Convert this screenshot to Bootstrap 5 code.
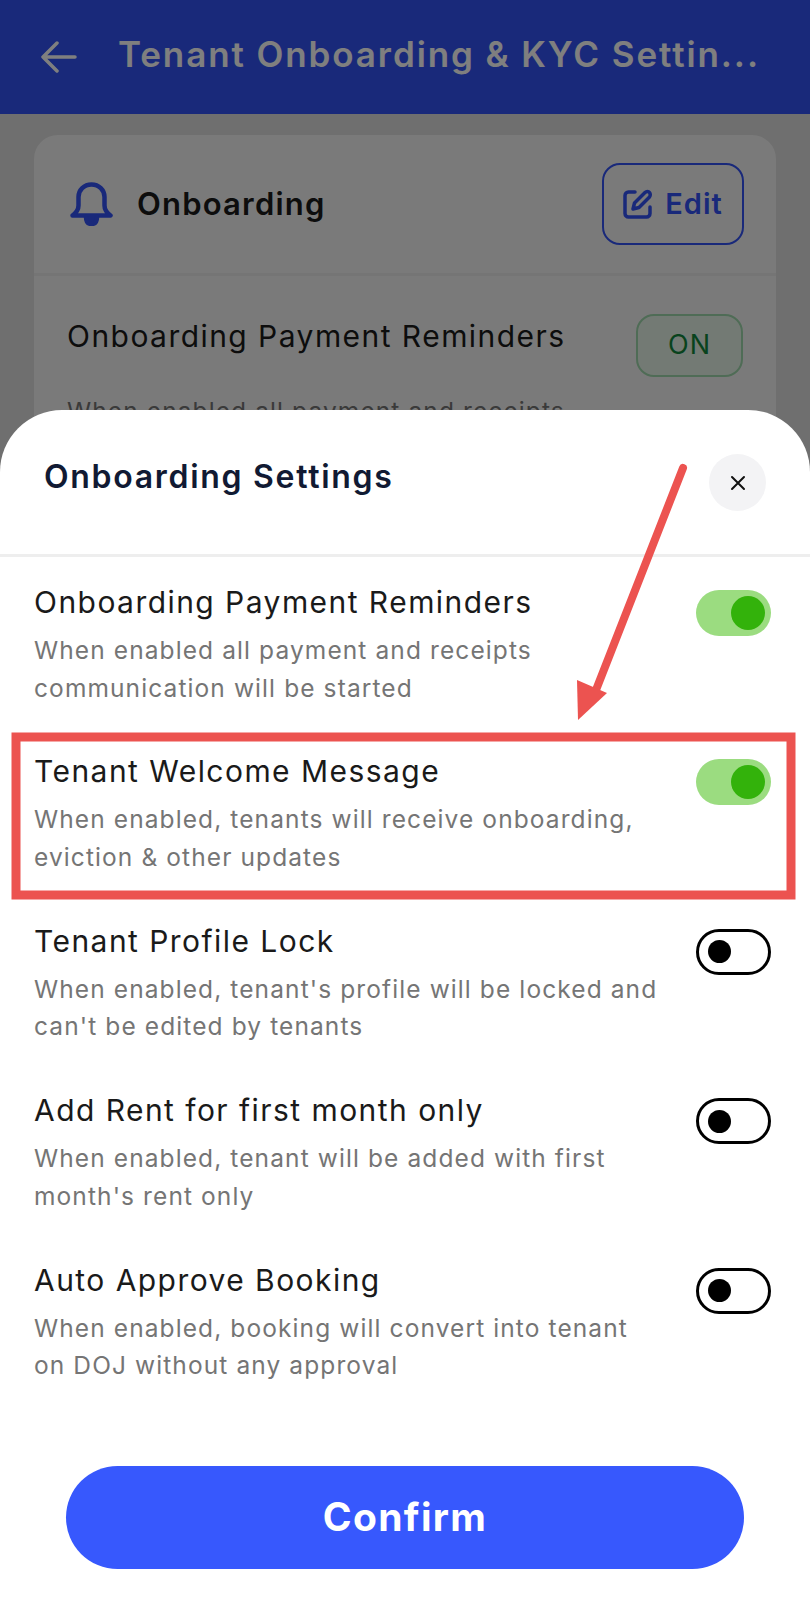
<!DOCTYPE html>
<html lang="en">
<head>
  <meta charset="UTF-8">
  <title>Onboarding Settings</title>
  <link href="https://cdn.jsdelivr.net/npm/bootstrap@5.3.0/dist/css/bootstrap.min.css" rel="stylesheet">
  <style>
    html, body { height: 1600px; }
    body {
      margin: 0;
      position: relative;
      overflow: hidden;
      background: #dedede;
      font-family: Inter, "Open Sans", sans-serif;
      color: #1a1a1a;
    }
    .app-head {
      height: 114px;
      padding: 0 41px;
      gap: 41px;
      background: #3252f4;
      color: #fff;
    }
    .app-head h1 { font-size: 35px; font-weight: 600; margin: 0 0 6px; white-space: nowrap; letter-spacing: 1.9px; }
    .bg-card {
      margin: 21px 34px 0;
      height: 600px;
      border: 0;
      border-radius: 24px;
      background: #f5f5f5;
    }
    .bg-head {
      height: 141px;
      padding: 0 32px 0 36px;
      border-bottom: 3px solid #ebebeb;
    }
    .bg-head h2 { font-size: 31px; font-weight: 600; margin: 0 0 0 24px; letter-spacing: 1.2px; }
    .edit-btn {
      width: 142px;
      height: 82px;
      gap: 12px;
      border: 2px solid #3252f4;
      border-radius: 18px;
      color: #3252f4;
      font-size: 29px;
      font-weight: 600;
      letter-spacing: 1px;
    }
    .edit-btn:hover { color: #3252f4; border-color: #3252f4; }
    .bg-row { padding: 41px 33px 0; }
    .on-pill {
      width: 107px;
      height: 63px;
      margin-top: -3px;
      border: 2px solid #9fd8ac;
      border-radius: 18px;
      background: #e6f4e9;
      color: #11863a;
      font-size: 27px;
      letter-spacing: 1px;
    }
    .row-name { font-size: 30px; line-height: 38px; margin: 0; letter-spacing: 1.45px; }
    .row-desc { font-size: 24.5px; line-height: 37.5px; color: #757575; margin: 11px 0 0; letter-spacing: 1.1px; }
    .bg-row .row-desc { margin-top: 16px; }
    .backdrop { position: absolute; inset: 0; background: rgba(0, 0, 0, .5); }
    .sheet {
      position: absolute;
      left: 0;
      right: 0;
      top: 410px;
      bottom: 0;
      border-radius: 62px 62px 0 0;
      background: #fff;
    }
    .sheet-head {
      height: 147px;
      padding: 44px 44px 0;
      border-bottom: 3px solid #eeeeee;
    }
    .sheet-head h2 { font-size: 32px; font-weight: 600; margin: 0; color: #111a33; line-height: 46px; letter-spacing: 1.7px; }
    .close-round {
      width: 57px;
      height: 57px;
      border: 0;
      padding: 0;
      border-radius: 50%;
      background: #f3f3f5;
      color: #111;
    }
    .set-list { padding: 26px 34px 0; }
    .set-row { height: 169.4px; }
    .set-text { width: 626px; }
    .tgl {
      flex: none;
      width: 75px;
      height: 46px;
      margin: 7px 5px 0 0;
      padding: 0 6px;
      border-radius: 23px;
    }
    .tgl i { display: block; border-radius: 50%; }
    .tgl-on { background: #9bdc80; justify-content: flex-end; }
    .tgl-on i { width: 34px; height: 34px; background: #33b20b; }
    .tgl-off { border: 3px solid #000; padding: 0 9px; }
    .tgl-off i { width: 23px; height: 23px; background: #000; }
    .sheet-foot { position: absolute; left: 66px; right: 66px; bottom: 31px; }
    .confirm-btn {
      height: 103px;
      border: 0;
      border-radius: 52px;
      background: #3758fd;
      color: #fff;
      font-size: 39px;
      font-weight: 700;
      letter-spacing: 1.3px;
    }
    .confirm-btn:hover { background: #3758fd; color: #fff; }
    .mark-up { position: absolute; left: 0; top: 0; pointer-events: none; }
  </style>
</head>
<body>
  <header class="app-head d-flex align-items-center">
    <svg width="36" height="32" viewBox="0 0 36 32" fill="none" stroke="#fff" stroke-width="3.5" stroke-linecap="round" stroke-linejoin="round"><path d="M34 16H2M16 2 2 16l14 14"/></svg>
    <h1>Tenant Onboarding &amp; KYC Settin...</h1>
  </header>

  <div class="card bg-card">
    <div class="bg-head d-flex align-items-center">
      <svg width="43" height="44" viewBox="0 0 43 44" fill="none" stroke="#3252f4" stroke-width="4.5" stroke-linecap="round" stroke-linejoin="round"><path d="M2.5 33.5c4-3 6-6 6-10V15c0-7 5.500-12.500 13-12.500S34.500 8 34.500 15v8.500c0 4 2 7 6 10z"/><path d="M16 35c0 5 2.500 7 5.500 7s5.500-2 5.500-7" fill="#3252f4"/></svg>
      <h2 class="flex-grow-1">Onboarding</h2>
      <a href="#" class="btn edit-btn d-flex align-items-center justify-content-center p-0">
        <svg width="30" height="30" viewBox="0 0 30 30" fill="none" stroke="#3252f4" stroke-width="3.5" stroke-linecap="round" stroke-linejoin="round"><path d="M12 3H5.500C3.500 3 2 4.500 2 6.500v18C2 26.500 3.500 28 5.500 28h18c2 0 3.500-1.500 3.500-3.500V18"/><path d="M10 20l1.500-6L22 3.500c1.500-1.500 3.500-1.500 4.500 0s1 3 0 4.500L16 18.500z"/></svg>
        Edit
      </a>
    </div>
    <div class="bg-row">
      <div class="d-flex justify-content-between align-items-start">
        <p class="row-name">Onboarding Payment Reminders</p>
        <span class="on-pill d-flex align-items-center justify-content-center">ON</span>
      </div>
      <p class="row-desc">When enabled all payment and receipts</p>
    </div>
  </div>

  <div class="backdrop"></div>

  <section class="sheet">
    <div class="sheet-head d-flex justify-content-between align-items-start">
      <h2>Onboarding Settings</h2>
      <button type="button" class="close-round d-flex align-items-center justify-content-center" aria-label="Close">
        <svg width="16" height="16" viewBox="0 0 16 16" fill="none" stroke="#111" stroke-width="2" stroke-linecap="round"><path d="M2 2l12 12M14 2 2 14"/></svg>
      </button>
    </div>

    <div class="set-list">
      <div class="set-row d-flex justify-content-between align-items-start">
        <div class="set-text">
          <p class="row-name">Onboarding Payment Reminders</p>
          <p class="row-desc">When enabled all payment and receipts communication will be started</p>
        </div>
        <span class="tgl tgl-on d-flex align-items-center"><i></i></span>
      </div>
      <div class="set-row d-flex justify-content-between align-items-start">
        <div class="set-text">
          <p class="row-name">Tenant Welcome Message</p>
          <p class="row-desc">When enabled, tenants will receive onboarding, eviction &amp; other updates</p>
        </div>
        <span class="tgl tgl-on d-flex align-items-center"><i></i></span>
      </div>
      <div class="set-row d-flex justify-content-between align-items-start">
        <div class="set-text">
          <p class="row-name">Tenant Profile Lock</p>
          <p class="row-desc">When enabled, tenant's profile will be locked and can't be edited by tenants</p>
        </div>
        <span class="tgl tgl-off d-flex align-items-center"><i></i></span>
      </div>
      <div class="set-row d-flex justify-content-between align-items-start">
        <div class="set-text">
          <p class="row-name">Add Rent for first month only</p>
          <p class="row-desc">When enabled, tenant will be added with first month's rent only</p>
        </div>
        <span class="tgl tgl-off d-flex align-items-center"><i></i></span>
      </div>
      <div class="set-row d-flex justify-content-between align-items-start">
        <div class="set-text">
          <p class="row-name">Auto Approve Booking</p>
          <p class="row-desc">When enabled, booking will convert into tenant on DOJ without any approval</p>
        </div>
        <span class="tgl tgl-off d-flex align-items-center"><i></i></span>
      </div>
    </div>

    <div class="sheet-foot">
      <button type="button" class="btn confirm-btn w-100">Confirm</button>
    </div>
  </section>

  <!-- red annotation drawn on top of the screenshot -->
  <svg class="mark-up" width="810" height="1600" viewBox="0 0 810 1600" fill="none">
    <rect x="16" y="737" width="775" height="158" stroke="#ec5350" stroke-width="9"/>
    <path d="M683 468 596 690" stroke="#ec5350" stroke-width="8" stroke-linecap="round"/>
    <path d="M578 720 577 680 607 693z" fill="#ec5350"/>
  </svg>
</body>
</html>
